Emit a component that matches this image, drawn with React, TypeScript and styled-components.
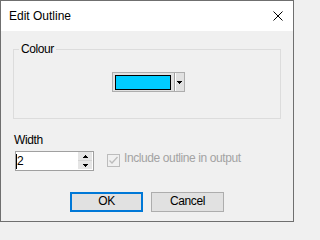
import React from 'react';
import styled, { createGlobalStyle } from 'styled-components';

const GlobalStyle = createGlobalStyle`
  html, body {
    margin: 0;
    padding: 0;
    background: #f0f0f0;
  }
  body {
    font-family: "Liberation Sans", Arial, sans-serif;
    font-size: 12px;
    color: #000;
  }
`;

const Window = styled.div`
  width: 294px;
  height: 222px;
  box-sizing: border-box;
  border: 1px solid #6f6f6f;
  background: #f0f0f0;
  display: flex;
  flex-direction: column;
`;

const TitleBar = styled.div`
  height: 30px;
  flex: none;
  background: #fff;
  display: flex;
  align-items: center;
  justify-content: space-between;
  padding: 0 10px 0 8px;
`;

const Title = styled.span`
  font-size: 12px;
  line-height: 15px;
`;

const CloseIcon = styled.svg`
  display: block;
  width: 10px;
  height: 10px;
`;

const Body = styled.div`
  flex: 1;
  display: flex;
  flex-direction: column;
  letter-spacing: -0.4px;
`;

const GroupBox = styled.fieldset`
  margin: 11px 12px 0;
  padding: 15px 0 26px;
  border: 1px solid #dcdcdc;
  min-width: 0;
`;

const Legend = styled.legend`
  margin-left: 5px;
  padding: 0 2px;
  line-height: 15px;
`;

const ColourRow = styled.div`
  display: flex;
  padding-left: 98px;
`;

const ColourPicker = styled.div`
  width: 73px;
  height: 20px;
  box-sizing: border-box;
  border: 1px solid #adadad;
  background: #e1e1e1;
  display: flex;
  align-items: stretch;
  padding: 0 0 0 2px;
`;

const Swatch = styled.div<{ colour: string }>`
  width: 56px;
  height: 15px;
  box-sizing: border-box;
  margin-top: 2px;
  border: 1px solid #000;
  background: ${(p) => p.colour};
`;

const Separator = styled.div`
  width: 1px;
  margin: 0 0 0 3px;
  background: #a0a0a0;
  border-right: 1px solid #fff;
`;

const ArrowWrap = styled.div`
  flex: 1;
  display: flex;
  align-items: center;
  padding-left: 1px;
`;

const WidthSection = styled.div`
  padding: 0 13px;
  margin-top: 14px;
`;

const Label = styled.div`
  line-height: 15px;
`;

const FieldRow = styled.div`
  display: flex;
  align-items: flex-start;
  margin-top: 3px;
`;

const SpinBox = styled.div`
  width: 79px;
  height: 20px;
  margin-left: 1px;
  box-sizing: border-box;
  border: 1px solid #a0a0a0;
  background: #fff;
  display: flex;
`;

const SpinValue = styled.div`
  flex: 1;
  display: flex;
  align-items: center;
  line-height: 15px;
`;

const Caret = styled.span`
  width: 1px;
  height: 15px;
  background: #000;
  margin-right: 0;
`;

const SpinButtons = styled.div`
  width: 14px;
  display: flex;
  flex-direction: column;
  gap: 1px;
  margin: 0 1px 1px 0;
  background: #d4d4d4;
`;

const SpinButton = styled.div`
  flex: 1;
  background: #e5e5e5;
  display: flex;
  align-items: center;
  justify-content: center;
`;

const CheckRow = styled.div`
  display: flex;
  align-items: flex-start;
  margin-left: 13px;
  color: #a3a3a3;
`;

const CheckBox = styled.div`
  width: 13px;
  height: 13px;
  box-sizing: border-box;
  margin-top: 3px;
  margin-right: 4px;
  border: 1px solid #bcbcbc;
  background: #f0f0f0;
  display: flex;
  align-items: center;
  justify-content: center;
`;

const CheckLabel = styled.span`
  line-height: 15px;
`;

const ButtonRow = styled.div`
  display: flex;
  justify-content: center;
  gap: 8px;
  margin-top: 21px;
`;

const Button = styled.div<{ primary?: boolean }>`
  width: 73px;
  height: 20px;
  box-sizing: border-box;
  background: #e1e1e1;
  border: ${(p) => (p.primary ? '2px solid #0078d7' : '1px solid #adadad')};
  display: flex;
  align-items: center;
  justify-content: center;
  line-height: 15px;
  padding-bottom: 1px;
`;

const Arrow = ({ up = false }: { up?: boolean }) => (
  <svg width="5" height="3" shapeRendering="crispEdges" style={{ display: 'block' }}>
    {up ? (
      <>
        <rect x="2" y="0" width="1" height="1" fill="#000" />
        <rect x="1" y="1" width="3" height="1" fill="#000" />
        <rect x="0" y="2" width="5" height="1" fill="#000" />
      </>
    ) : (
      <>
        <rect x="0" y="0" width="5" height="1" fill="#000" />
        <rect x="1" y="1" width="3" height="1" fill="#000" />
        <rect x="2" y="2" width="1" height="1" fill="#000" />
      </>
    )}
  </svg>
);

const App = () => {
  return (
    <>
      <GlobalStyle />
      <Window>
        <TitleBar>
          <Title>Edit Outline</Title>
          <CloseIcon viewBox="0 0 10 10">
            <path d="M0.5 0.5 L9.5 9.5 M9.5 0.5 L0.5 9.5" stroke="#000" strokeWidth="1" />
          </CloseIcon>
        </TitleBar>
        <Body>
          <GroupBox>
            <Legend>Colour</Legend>
            <ColourRow>
              <ColourPicker>
                <Swatch colour="#00ccff" />
                <Separator />
                <ArrowWrap>
                  <Arrow />
                </ArrowWrap>
              </ColourPicker>
            </ColourRow>
          </GroupBox>
          <WidthSection>
            <Label>Width</Label>
            <FieldRow>
              <SpinBox>
                <SpinValue>
                  <Caret />
                  <span>2</span>
                </SpinValue>
                <SpinButtons>
                  <SpinButton>
                    <Arrow up />
                  </SpinButton>
                  <SpinButton>
                    <Arrow />
                  </SpinButton>
                </SpinButtons>
              </SpinBox>
              <CheckRow>
                <CheckBox>
                  <svg width="11" height="11" viewBox="0 0 11 11" style={{ display: 'block' }}>
                    <path d="M1.5 5.5 L4 8 L9.5 2" fill="none" stroke="#bcbcbc" strokeWidth="1.3" />
                  </svg>
                </CheckBox>
                <CheckLabel>Include outline in output</CheckLabel>
              </CheckRow>
            </FieldRow>
          </WidthSection>
          <ButtonRow>
            <Button primary>OK</Button>
            <Button>Cancel</Button>
          </ButtonRow>
        </Body>
      </Window>
    </>
  );
};

export default App;
